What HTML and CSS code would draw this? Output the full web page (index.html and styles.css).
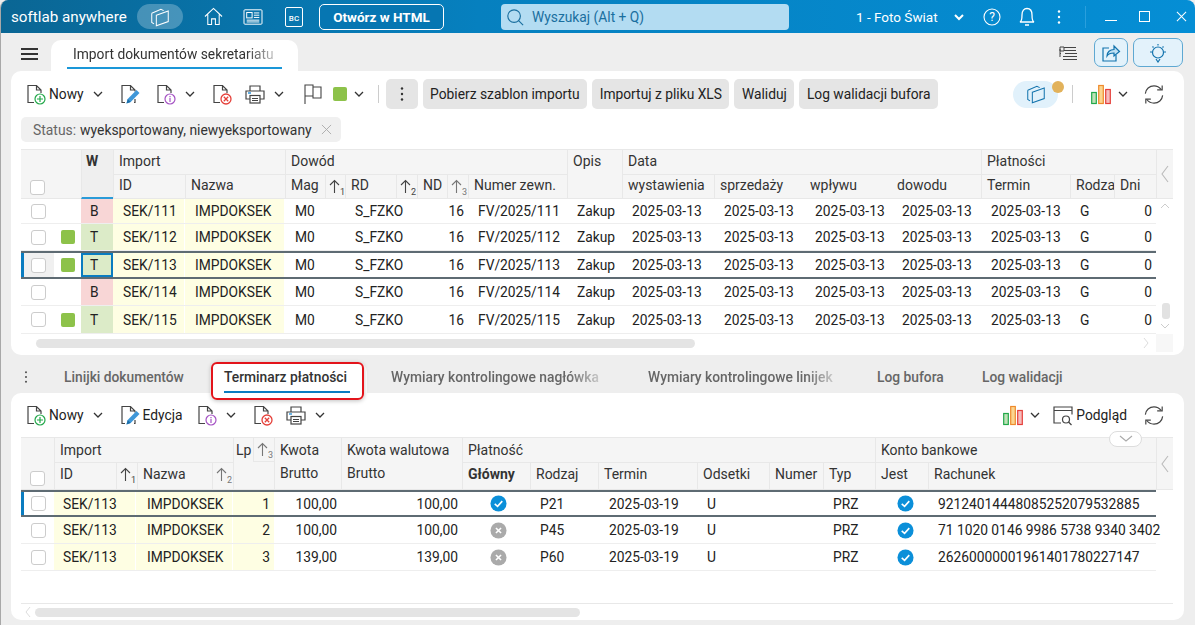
FILE: index.html
```html
<!DOCTYPE html>
<html lang="pl">
<head>
<meta charset="utf-8">
<title>Import dokumentów sekretariatu</title>
<link rel="stylesheet" href="styles.css">
</head>
<body>
<svg class="defs" width="0" height="0" aria-hidden="true">
  <symbol id="doc" viewBox="0 0 20 21"><path d="M8 18.5H2V1.5h8.5L15 6v3M10.5 1.5V6H15" fill="none" stroke="#444" stroke-width="1.2"/></symbol>
  <symbol id="doc-new" viewBox="0 0 20 21"><use href="#doc"/><circle cx="14" cy="15" r="5" fill="#fff" stroke="#22a84a" stroke-width="1.2"/><path d="M14 12v6M11 15h6" stroke="#22a84a" stroke-width="1.2"/></symbol>
  <symbol id="doc-edit" viewBox="0 0 20 21"><path d="M5 18.5H2V1.5h8.5L15 6v1.5M10.5 1.5V6H15M14 18.5h1V15" fill="none" stroke="#444" stroke-width="1.2"/><path d="M6.5 19.5l1.2-4.5L16.5 6l3 3-8.8 9z" fill="#3f97d8"/><path d="M6.5 19.5l1.2-4.5 3 3z" fill="#1b6ea8"/></symbol>
  <symbol id="doc-info" viewBox="0 0 20 21"><use href="#doc"/><circle cx="14" cy="15" r="5" fill="#fff" stroke="#a552c4" stroke-width="1.2"/><path d="M14 14v4M14 12v1.2" stroke="#a552c4" stroke-width="1.2"/></symbol>
  <symbol id="doc-del" viewBox="0 0 20 21"><use href="#doc"/><circle cx="14" cy="15" r="5" fill="#fff" stroke="#e5403a" stroke-width="1.3"/><path d="M11.8 12.8l4.4 4.4M16.2 12.8l-4.4 4.4" stroke="#e5403a" stroke-width="1.3"/></symbol>
  <symbol id="printer" viewBox="0 0 20 20"><path d="M5 6V1.5h10V6M5 14.5H1V6.500h18v8H15" fill="none" stroke="#444" stroke-width="1.2"/><rect x="5" y="11" width="10" height="7.5" fill="#fff" stroke="#444" stroke-width="1.2"/><path d="M7 14h6M7 16h6" stroke="#444"/><path d="M3 8.500h3" stroke="#2a92d8" stroke-width="1.4"/></symbol>
  <symbol id="chev" viewBox="0 0 12 12"><path d="M2 4l4 4 4-4" fill="none" stroke="#333" stroke-width="1.3"/></symbol>
  <symbol id="kebab" viewBox="0 0 4 16"><circle cx="2" cy="2.5" r="1.2"/><circle cx="2" cy="8" r="1.2"/><circle cx="2" cy="13.5" r="1.2"/></symbol>
  <symbol id="cubes" viewBox="0 0 24 24"><path d="M3 8l10-4.500 3 1.500M3 8v10l2.500 1.500" fill="none" stroke="currentColor" stroke-width="1.1"/><path d="M8 10l13-4.500v11.500L8 21.500z" fill="none" stroke="currentColor" stroke-width="1.1"/></symbol>
  <symbol id="chart" viewBox="0 0 20 20"><rect x=".7" y="8" width="4.600" height="11" fill="#bfe3b8" stroke="#22a84a" stroke-width="1.200"/><rect x="7.700" y="1" width="4.600" height="18" fill="#fbd58f" stroke="#ef8a2c" stroke-width="1.200"/><rect x="14.700" y="5" width="4.600" height="14" fill="#f6bcbc" stroke="#e5403a" stroke-width="1.200"/></symbol>
  <symbol id="refresh" viewBox="0 0 22 22"><path d="M1.500 10C2 5 6 1.500 11 1.500c3.500 0 6 1.500 8 4M20.500 12c-.5 5-4.500 8.500-9.500 8.500-3.500 0-6-1.500-8-4" fill="none" stroke="#444" stroke-width="1.300"/><path d="M20 1v5h-5.500M2 21v-5h5.500" fill="none" stroke="#444" stroke-width="1.300"/></symbol>
  <symbol id="ok" viewBox="0 0 18 18"><circle cx="9" cy="9" r="8.500" fill="#0b8fd9"/><path d="M5 9.500l3 2.500 5-5.500" fill="none" stroke="#fff" stroke-width="1.700"/></symbol>
  <symbol id="no" viewBox="0 0 18 18"><circle cx="9" cy="9" r="8.500" fill="#aaa"/><path d="M6.300 6.300l5.400 5.400M11.700 6.300l-5.400 5.400" fill="none" stroke="#fff" stroke-width="1.700"/></symbol>
  <symbol id="up" viewBox="0 0 11 14"><path d="M5.500 14V1.500M1 6l4.500-4.500L10 6" fill="none" stroke="currentColor" stroke-width="1.100"/></symbol>
  <symbol id="left" viewBox="0 0 10 18"><path d="M8 1L2 9l6 8" fill="none" stroke="#bbb" stroke-width="1.100"/></symbol>
</svg>

<div class="window">
  <header class="titlebar">
    <span class="brand">softlab anywhere</span>
    <span class="cube-pill"><svg class="ic22"><use href="#cubes"/></svg></span>
    <svg class="home" viewBox="0 0 20 20" fill="none" stroke="#fff" stroke-width="1.100"><path d="M1 10l9-8.500L19 10M4 8v10.500h4v-6h4v6h4V8"/></svg>
    <svg class="news" viewBox="0 0 22 20" fill="none" stroke="#fff" stroke-width="1.100"><rect x="1" y="2" width="20" height="16" rx="1"/><rect x="4" y="5" width="6" height="6"/><path d="M12 5.500h6M12 8h6M12 10.500h6M4 13.500h14M4 15.500h14"/></svg>
    <span class="bc">BC</span>
    <button class="html-btn">Otwórz w HTML</button>
    <div class="search">
      <svg class="search-ic" viewBox="0 0 20 20" fill="none" stroke="#1a6f9f" stroke-width="1.300"><circle cx="9" cy="9" r="7"/><path d="M14 14l5 5"/></svg>
      <span>Wyszukaj (Alt + Q)</span>
    </div>
    <span class="company">1 - Foto Świat</span>
    <svg class="tb-chev" viewBox="0 0 12 12"><path d="M2 4l4 4 4-4" fill="none" stroke="#fff" stroke-width="2"/></svg>
    <svg class="help" viewBox="0 0 18 18"><circle cx="9" cy="9" r="8" fill="none" stroke="#fff" stroke-width="1.100"/><text x="9" y="13" text-anchor="middle" class="help-q">?</text></svg>
    <svg class="bell" viewBox="0 0 16 20" fill="none" stroke="#fff" stroke-width="1.300"><path d="M1 15.500c2-1 2-3 2-7C3 4 5 2 8 2s5 2 5 6.500c0 4 0 6 2 7zM6 18.500h4"/></svg>
    <svg class="tb-kebab"><use href="#kebab"/></svg>
    <span class="tb-sep"></span>
    <span class="win-min"></span>
    <span class="win-max"></span>
    <svg class="win-close" viewBox="0 0 12 12"><path d="M1 1l10 10M11 1L1 11" stroke="#fff" stroke-width="1.100"/></svg>
  </header>

  <div class="tabbar">
    <span class="burger"><i></i><i></i><i></i></span>
    <div class="doc-tab"><span class="fade">Import dokumentów sekretariatu</span></div>
    <svg class="list-ic" viewBox="0 0 18 16" fill="none" stroke="#444"><path d="M1 1h4v4H1zM5 1.500h12M5 4.500h12M6 7.500h12M1 7.500h1M4 10.500h14M4 13.500h14M1 3v8"/></svg>
    <button class="tb-square share"><svg viewBox="0 0 20 20" fill="none" stroke="#1273ad" stroke-width="1.200"><path d="M8 5H2v13h13v-6"/><path d="M6 13c0-4 3-6.500 7-6.500V3l5.500 5.500L13 13V10c-3 0-5.500.5-7 3z" fill="#bfe0f3"/></svg></button>
    <button class="tb-square bulb"><svg viewBox="0 0 26 20" fill="none" stroke="#1273ad" stroke-width="1.200"><circle cx="13" cy="9.500" r="5.500"/><path d="M11 16l2 3 2-3M13 1v1.500M5 9h2M19 9h2M7.500 3.500l1 1M18.500 3.500l-1 1"/></svg></button>
  </div>

  <section class="panel upper">
    <div class="toolbar">
      <button class="tool"><svg class="ic20"><use href="#doc-new"/></svg><span class="tool-label">Nowy</span><svg class="chev"><use href="#chev"/></svg></button>
      <button class="tool"><svg class="ic20"><use href="#doc-edit"/></svg></button>
      <button class="tool"><svg class="ic20"><use href="#doc-info"/></svg><svg class="chev"><use href="#chev"/></svg></button>
      <button class="tool"><svg class="ic20"><use href="#doc-del"/></svg></button>
      <button class="tool tight"><svg class="ic20"><use href="#printer"/></svg><svg class="chev"><use href="#chev"/></svg></button>
      <button class="tool flag-tool"><svg class="flag" viewBox="0 0 18 20" fill="none" stroke="#444" stroke-width="1.100"><path d="M1 20V1h8v2h8v11H9v-2H1M9 3v9"/></svg><span class="swatch tool-swatch"></span><svg class="chev near"><use href="#chev"/></svg></button>
      <span class="v-sep"></span>
      <button class="gray-btn kebab-btn"><svg class="kebab-ic"><use href="#kebab"/></svg></button>
      <button class="gray-btn">Pobierz szablon importu</button>
      <button class="gray-btn">Importuj z pliku XLS</button>
      <button class="gray-btn">Waliduj</button>
      <button class="gray-btn">Log walidacji bufora</button>
      <span class="grow"></span>
      <span class="cube-blue"><svg class="ic22"><use href="#cubes"/></svg><i class="dot"></i></span>
      <span class="v-sep sep-right"></span>
      <button class="tool chart-tool"><svg class="ic20"><use href="#chart"/></svg><svg class="chev near"><use href="#chev"/></svg></button>
      <button class="tool refresh-tool"><svg class="ic20"><use href="#refresh"/></svg></button>
    </div>
    <div class="chip"><span class="chip-key">Status:</span> <span class="chip-val">wyeksportowany, niewyeksportowany</span>
      <svg class="chip-x" viewBox="0 0 12 12"><path d="M1 1l10 10M11 1L1 11" stroke="#aaa" stroke-width="1"/></svg></div>

    <div class="grid">
      <div class="ghead h49">
        <div class="hc w33 check-head"><span class="cb"></span></div>
        <div class="hc w27"></div>
        <div class="hc w32 w-head">W</div>
        <div class="hg w172"><div class="ht">Import</div><div class="hs"><div class="sc w72">ID</div><div class="sc w100">Nazwa</div></div></div>
        <div class="hg w282"><div class="ht">Dowód</div><div class="hs">
          <div class="sc w40">Mag</div><div class="sc sort w20"><svg><use href="#up"/></svg><i>1</i></div>
          <div class="sc w51">RD</div><div class="sc sort w21"><svg><use href="#up"/></svg><i>2</i></div>
          <div class="sc w30">ND</div><div class="sc sort w21 pale"><svg><use href="#up"/></svg><i>3</i></div>
          <div class="sc w99 clip">Numer zewn.</div></div></div>
        <div class="hg w55"><div class="ht">Opis</div></div>
        <div class="hg w359"><div class="ht">Data</div><div class="hs"><div class="sc w92">wystawienia</div><div class="sc w91">sprzedaży</div><div class="sc w87 nl">wpływu</div><div class="sc w89 nl">dowodu</div></div></div>
        <div class="hg w175"><div class="ht">Płatności</div><div class="hs"><div class="sc w89">Termin</div><div class="sc w44">Rodza</div><div class="sc w42">Dni</div></div></div>
        <div class="hc w17 head-end"><svg class="left-ic"><use href="#left"/></svg></div>
      </div>
      <div class="gbody">
        <div class="rows">
          <div class="row urow h25">
            <div class="td"><span class="cb"></span></div><div class="td"></div><div class="td wc bad">B</div>
            <div class="td y">SEK/111</div><div class="td y">IMPDOKSEK</div><div class="td">M0</div><div class="td">S_FZKO</div><div class="td r">16</div><div class="td">FV/2025/111</div><div class="td">Zakup</div>
            <div class="td">2025-03-13</div><div class="td">2025-03-13</div><div class="td">2025-03-13</div><div class="td">2025-03-13</div><div class="td">2025-03-13</div><div class="td">G</div><div class="td r">0</div>
          </div>
          <div class="row urow h27">
            <div class="td"><span class="cb"></span></div><div class="td"><span class="swatch"></span></div><div class="td wc good">T</div>
            <div class="td y">SEK/112</div><div class="td y">IMPDOKSEK</div><div class="td">M0</div><div class="td">S_FZKO</div><div class="td r">16</div><div class="td">FV/2025/112</div><div class="td">Zakup</div>
            <div class="td">2025-03-13</div><div class="td">2025-03-13</div><div class="td">2025-03-13</div><div class="td">2025-03-13</div><div class="td">2025-03-13</div><div class="td">G</div><div class="td r">0</div>
          </div>
          <div class="row urow h28 sel">
            <div class="td gray"><span class="cb"></span></div><div class="td"><span class="swatch"></span></div><div class="td wc good focus">T</div>
            <div class="td y">SEK/113</div><div class="td y">IMPDOKSEK</div><div class="td">M0</div><div class="td">S_FZKO</div><div class="td r">16</div><div class="td">FV/2025/113</div><div class="td">Zakup</div>
            <div class="td">2025-03-13</div><div class="td">2025-03-13</div><div class="td">2025-03-13</div><div class="td">2025-03-13</div><div class="td">2025-03-13</div><div class="td">G</div><div class="td r">0</div>
          </div>
          <div class="row urow h27">
            <div class="td"><span class="cb"></span></div><div class="td"></div><div class="td wc bad">B</div>
            <div class="td y">SEK/114</div><div class="td y">IMPDOKSEK</div><div class="td">M0</div><div class="td">S_FZKO</div><div class="td r">16</div><div class="td">FV/2025/114</div><div class="td">Zakup</div>
            <div class="td">2025-03-13</div><div class="td">2025-03-13</div><div class="td">2025-03-13</div><div class="td">2025-03-13</div><div class="td">2025-03-13</div><div class="td">G</div><div class="td r">0</div>
          </div>
          <div class="row urow h28">
            <div class="td"><span class="cb"></span></div><div class="td"><span class="swatch"></span></div><div class="td wc good">T</div>
            <div class="td y">SEK/115</div><div class="td y">IMPDOKSEK</div><div class="td">M0</div><div class="td">S_FZKO</div><div class="td r">16</div><div class="td">FV/2025/115</div><div class="td">Zakup</div>
            <div class="td">2025-03-13</div><div class="td">2025-03-13</div><div class="td">2025-03-13</div><div class="td">2025-03-13</div><div class="td">2025-03-13</div><div class="td">G</div><div class="td r">0</div>
          </div>
        </div>
        <div class="vscroll">
          <svg class="vs-chev" viewBox="0 0 12 12"><path d="M2 8l4-4 4 4" fill="none" stroke="#ccc"/></svg>
          <span class="grow"></span>
          <span class="vs-thumb"></span>
          <svg class="vs-chev" viewBox="0 0 12 12"><path d="M2 4l4 4 4-4" fill="none" stroke="#ccc"/></svg>
        </div>
      </div>
      <div class="hscroll up-h">
        <span class="h-thumb thumb-up"></span>
        <span class="grow"></span>
        <svg class="hs-right" viewBox="0 0 8 14"><path d="M2 2l4 5-4 5" fill="none" stroke="#ddd"/></svg>
        <span class="corner"></span>
      </div>
    </div>
  </section>

  <nav class="subtabs">
    <svg class="sub-kebab"><use href="#kebab"/></svg>
    <span class="subtab first">Linijki dokumentów</span>
    <span class="subtab active">Terminarz płatności</span>
    <span class="subtab t3 fade">Wymiary kontrolingowe nagłówka</span>
    <span class="subtab t4 fade">Wymiary kontrolingowe linijek</span>
    <span class="subtab t5">Log bufora</span>
    <span class="subtab t6">Log walidacji</span>
  </nav>

  <section class="panel lower">
    <div class="toolbar low-bar">
      <button class="tool"><svg class="ic20"><use href="#doc-new"/></svg><span class="tool-label">Nowy</span><svg class="chev"><use href="#chev"/></svg></button>
      <button class="tool"><svg class="ic20"><use href="#doc-edit"/></svg><span class="tool-label">Edycja</span></button>
      <button class="tool info-low"><svg class="ic20"><use href="#doc-info"/></svg><svg class="chev"><use href="#chev"/></svg></button>
      <button class="tool"><svg class="ic20"><use href="#doc-del"/></svg></button>
      <button class="tool tight print-low"><svg class="ic20"><use href="#printer"/></svg><svg class="chev"><use href="#chev"/></svg></button>
      <span class="grow"></span>
      <button class="tool chart-tool"><svg class="ic20"><use href="#chart"/></svg><svg class="chev near"><use href="#chev"/></svg></button>
      <button class="tool preview"><svg class="ic20" viewBox="0 0 20 20" fill="none" stroke="#444" stroke-width="1.200"><path d="M8 17.500H1V1.500h18V9M1 5h18" /><circle cx="13" cy="14" r="3.500"/><path d="M15.500 16.500l3 3"/></svg><span class="tool-label">Podgląd</span></button>
      <button class="tool refresh-tool low-ref"><svg class="ic20"><use href="#refresh"/></svg></button>
    </div>
    <span class="collapse"><svg viewBox="0 0 14 8"><path d="M1 1l6 5 6-5" fill="none" stroke="#aaa" stroke-width="1.100"/></svg></span>
    <div class="grid lgrid">
      <div class="ghead h52">
        <div class="hc w33 check-head"><span class="cb"></span></div>
        <div class="hg w179"><div class="ht">Import</div><div class="hs"><div class="sc w62">ID</div><div class="sc sort w21"><svg><use href="#up"/></svg><i>1</i></div><div class="sc w75">Nazwa</div><div class="sc sort w21 pale"><svg><use href="#up"/></svg><i>2</i></div></div></div>
        <div class="hg w41"><div class="ht lp"><span class="lp-t">Lp</span><span class="sort w22 pale"><svg><use href="#up"/></svg><i>3</i></span></div></div>
        <div class="hg w67"><div class="ht">Kwota</div><div class="hs nolines"><div class="sc">Brutto</div></div></div>
        <div class="hg w121"><div class="ht">Kwota walutowa</div><div class="hs nolines"><div class="sc">Brutto</div></div></div>
        <div class="hg w413"><div class="ht">Płatność</div><div class="hs"><div class="sc w68 bold">Główny</div><div class="sc w68">Rodzaj</div><div class="sc w99">Termin</div><div class="sc w72">Odsetki</div><div class="sc w54 clip">Numer</div><div class="sc w52">Typ</div></div></div>
        <div class="hg w281"><div class="ht">Konto bankowe</div><div class="hs"><div class="sc w53">Jest</div><div class="sc w228">Rachunek</div></div></div>
        <div class="hc w17 head-end"><svg class="left-ic"><use href="#left"/></svg></div>
      </div>
      <div class="lrows">
        <div class="row lrow h27 sel sel-low">
          <div class="td"><span class="cb"></span></div><div class="td y">SEK/113</div><div class="td y">IMPDOKSEK</div><div class="td y r">1</div><div class="td r">100,00</div><div class="td r">100,00</div>
          <div class="td c"><svg class="ic16"><use href="#ok"/></svg></div><div class="td">P21</div><div class="td">2025-03-19</div><div class="td">U</div><div class="td"></div><div class="td">PRZ</div>
          <div class="td c"><svg class="ic16"><use href="#ok"/></svg></div><div class="td">92124014448085252079532885</div>
        </div>
        <div class="row lrow h27">
          <div class="td"><span class="cb"></span></div><div class="td y">SEK/113</div><div class="td y">IMPDOKSEK</div><div class="td y r">2</div><div class="td r">100,00</div><div class="td r">100,00</div>
          <div class="td c"><svg class="ic16"><use href="#no"/></svg></div><div class="td">P45</div><div class="td">2025-03-19</div><div class="td">U</div><div class="td"></div><div class="td">PRZ</div>
          <div class="td c"><svg class="ic16"><use href="#ok"/></svg></div><div class="td">71 1020 0146 9986 5738 9340 3402</div>
        </div>
        <div class="row lrow h27">
          <div class="td"><span class="cb"></span></div><div class="td y">SEK/113</div><div class="td y">IMPDOKSEK</div><div class="td y r">3</div><div class="td r">139,00</div><div class="td r">139,00</div>
          <div class="td c"><svg class="ic16"><use href="#no"/></svg></div><div class="td">P60</div><div class="td">2025-03-19</div><div class="td">U</div><div class="td"></div><div class="td">PRZ</div>
          <div class="td c"><svg class="ic16"><use href="#ok"/></svg></div><div class="td">26260000001961401780227147</div>
        </div>
      </div>
      <div class="hscroll low-h">
        <svg class="hs-left" viewBox="0 0 8 14"><path d="M6 2L2 7l4 5" fill="none" stroke="#ddd"/></svg>
        <span class="h-thumb thumb-low"></span>
      </div>
    </div>
  </section>
</div>
</body>
</html>
```

FILE: styles.css
```css
* { box-sizing: border-box; }
html, body { margin: 0; padding: 0; }
body { width: 1195px; height: 625px; overflow: hidden; background: #eee; font-family: Roboto, "Liberation Sans", sans-serif; font-size: 14px; color: #222; }
.defs { position: absolute; }
button { font: inherit; color: inherit; border: 0; background: none; padding: 0; }
i { font-style: normal; }
svg { display: block; flex: none; }
.grow { flex: 1; }

.window { width: 1195px; height: 625px; display: flex; flex-direction: column; background: #eee; border-left: 1px solid #a8a8a8; border-radius: 8px 8px 0 0; overflow: hidden; }

/* title bar */
.titlebar { height: 33px; flex: none; display: flex; align-items: center; color: #fff; background: linear-gradient(90deg, #0a6694 0, #0680bf 40%, #058ed5 100%); }
.brand { font-size: 15.2px; margin-left: 10px; width: 126px; white-space: nowrap; }
.cube-pill { width: 46px; height: 25px; border-radius: 13px; background: rgba(255,255,255,.25); display: flex; align-items: center; justify-content: center; color: #fff; }
.ic22 { width: 22px; height: 22px; }
.home { width: 19px; height: 19px; margin-left: 21px; }
.news { width: 20px; height: 18px; margin-left: 20px; }
.bc { width: 18px; height: 20px; margin-left: 22px; border: 1px solid #fff; border-radius: 2px; font-size: 8px; font-weight: 500; text-align: center; line-height: 22px; }
.html-btn { width: 125px; height: 26px; margin-left: 16px; border: 1px solid #fff; border-radius: 5px; color: #fff; font-weight: 700; font-size: 13.5px; background: #0676b2; }
.search { width: 288px; height: 26px; margin-left: 57px; background: #b3dcf2; border-radius: 4px; display: flex; align-items: center; padding-left: 5px; color: #1a6f9f; font-size: 13.8px; }
.search-ic { width: 18px; height: 18px; margin-right: 8px; }
.company { margin-left: 67px; width: 84px; font-size: 13.5px; white-space: nowrap; }
.tb-chev { width: 12px; height: 12px; margin-left: 13px; }
.help { width: 18px; height: 18px; margin-left: 18px; }
.help-q { font-size: 12px; fill: #fff; font-family: Roboto, sans-serif; }
.bell { width: 16px; height: 21px; margin-left: 18px; }
.tb-kebab { width: 4px; height: 16px; margin-left: 22px; fill: #fff; }
.tb-sep { width: 1px; height: 22px; margin-left: 24px; background: #2a9fdd; }
.win-min { width: 12px; height: 1px; margin-left: 19px; margin-top: 8px; background: #fff; }
.win-max { width: 11px; height: 11px; margin-left: 22px; border: 1px solid #fff; }
.win-close { width: 11px; height: 11px; margin-left: 26px; }

/* tab strip */
.tabbar { height: 38px; flex: none; display: flex; align-items: flex-end; }
.burger { width: 17px; margin-left: 20px; margin-bottom: 11px; display: flex; flex-direction: column; gap: 3px; }
.burger i { height: 2px; background: #333; }
.doc-tab { width: 247px; height: 31px; margin-left: 13px; background: #fff; border-radius: 10px 10px 0 0; position: relative; padding: 6px 22px 0; font-size: 13.8px; color: #333; white-space: nowrap; }
.doc-tab::after { content: ""; position: absolute; left: 16px; right: 16px; bottom: 2px; height: 2px; background: #1a97d8; }
.fade { display: inline-block; overflow: hidden; -webkit-mask-image: linear-gradient(90deg, #000 85%, rgba(0,0,0,.25) 100%); mask-image: linear-gradient(90deg, #000 85%, rgba(0,0,0,.25) 100%); }
.doc-tab .fade { width: 203px; }
.list-ic { width: 18px; height: 16px; margin-left: 761px; margin-bottom: 9px; }
.tb-square { height: 29px; margin-bottom: 4px; border: 1px solid #5ea8d2; border-radius: 7px; background: #e3f2fb; display: flex; align-items: center; justify-content: center; }
.share { width: 34px; margin-left: 17px; }
.share svg { width: 20px; height: 20px; }
.bulb { width: 50px; margin-left: 5px; }
.bulb svg { width: 26px; height: 20px; }

/* panels */
.panel { background: #fff; margin: 0 11px 0 10px; position: relative; display: flex; flex-direction: column; flex: none; }
.upper { height: 284px; border-radius: 10px; }
.lower { height: 227px; border-radius: 10px; }

/* toolbars */
.toolbar { height: 38px; flex: none; display: flex; align-items: center; padding: 8px 0 0 9px; }
.low-bar { height: 44px; padding-top: 0; }
.tool { height: 30px; display: flex; align-items: center; padding: 0 6px; margin-right: 4px; white-space: nowrap; font-size: 13.8px; }
.tool.tight { margin-left: -3px; margin-right: 5px; }
.ic20 { width: 20px; height: 21px; }
.ic16 { width: 17px; height: 17px; }
.tool-label { margin-left: 3px; }
.chev { width: 12px; height: 12px; margin-left: 8px; }
.chev.near { margin-left: 6px; }
.info-low { margin-left: -2px; }
.print-low { margin-left: -2px; }
.flag-tool { margin-left: 2px; }
.flag { width: 18px; height: 20px; }
.swatch { display: block; width: 14px; height: 14px; background: #8dc24a; border-radius: 2px; }
.tool-swatch { margin-left: 11px; }
.v-sep { width: 1px; height: 18px; background: #ccc; margin-left: 3px; margin-right: 7px; }
.gray-btn { height: 30px; padding: 0 7.5px; margin-right: 5px; background: #e5e5e5; border-radius: 5px; font-size: 13.8px; white-space: nowrap; color: #222; }
.kebab-btn { width: 32px; display: flex; align-items: center; justify-content: center; padding: 0; }
.kebab-ic { width: 4px; height: 16px; fill: #333; }
.cube-blue { width: 45px; height: 27px; border-radius: 14px; background: #e1f1fb; color: #1273ad; position: relative; display: flex; align-items: center; justify-content: center; }
.dot { position: absolute; width: 12px; height: 12px; border-radius: 50%; background: #e2b25b; right: -6px; top: 0; }
.sep-right { margin-left: 14px; margin-right: 12px; }
.chart-tool { margin-right: 0; }
.refresh-tool { margin-right: 14px; margin-left: 3px; }
.low-ref { margin-left: 0; }
.preview { margin-right: 0; padding-right: 11px; }
.preview .tool-label { margin-left: 3px; }

.chip { height: 25px; width: 320px; flex: none; margin: 8px 0 0 10px; background: #f0f0f0; border-radius: 5px; display: flex; align-items: center; padding-left: 12px; gap: 4px; white-space: nowrap; font-size: 13.9px; }
.chip-key { color: #666; }
.chip-val { color: #333; }
.chip-x { width: 11px; height: 11px; margin-left: 5px; }

/* grids */
.grid { margin: 7px 0 0 10px; width: 1152px; flex: none; }
.lgrid { margin-top: 0; }
.ghead { display: flex; background: #f5f5f5; border-top: 1px solid #e8e8e8; border-bottom: 1px solid #e8e8e8; color: #333; font-size: 14px; }
.h49 { height: 50px; }
.h52 { height: 53px; }
.hc { flex: none; position: relative; }
.check-head { display: flex; align-items: flex-end; justify-content: center; padding-bottom: 3px; }
.cb { display: block; width: 15px; height: 15px; background: #fff; border: 1px solid #ccc; border-radius: 3px; }
.w-head { background: #efefef; border-bottom: 2px solid #2a9bd8; padding: 3px 0 0 4px; font-weight: 700; border-left: 1px solid #e8e8e8; margin-bottom: -1px; }
.hg { flex: none; display: flex; flex-direction: column; border-left: 1px solid #e8e8e8; }
.ht { height: 24px; padding: 3px 0 0 5px; line-height: 18px; white-space: nowrap; }
.h49 .ht { padding-top: 2px; }
.hs { display: flex; height: 24px; margin-left: -1px; border-top: 1px solid #e8e8e8; flex: 1; }
.nolines { border-top: 0; margin-left: 0; }
.sc { flex: none; padding: 2px 0 0 5px; line-height: 18px; white-space: nowrap; border-left: 1px solid #e8e8e8; }
.h49 .sc { padding-top: 1px; }
.nolines .sc { border-left: 0; }
.sc.nl { border-left: 0; padding-left: 5px; }
.clip { overflow: hidden; }
.bold { font-weight: 700; }
.sort, .h49 .sort { display: inline-flex; align-items: flex-start; padding: 4px 0 0 3px; color: #444; }
.sort svg { width: 11px; height: 14px; }
.sort i { font-size: 9px; line-height: 9px; margin-top: 9px; }
.sort.pale { color: #777; }
.ht.lp { display: flex; padding: 0 0 0 2px; height: 24px; }
.lp-t { padding-top: 3px; width: 18px; }
.lp .sort { border-left: 1px solid #e8e8e8; border-bottom: 1px solid #e8e8e8; height: 24px; }
.head-end { border-left: 1px solid #e8e8e8; display: flex; align-items: center; justify-content: center; }
.left-ic { width: 10px; height: 18px; }

.w17 { width: 17px; } .w20 { width: 20px; } .w21 { width: 21px; } .w22 { width: 22px; } .w27 { width: 27px; }
.w30 { width: 30px; } .w32 { width: 32px; } .w33 { width: 33px; } .w40 { width: 40px; } .w41 { width: 41px; }
.w42 { width: 42px; } .w44 { width: 44px; } .w51 { width: 51px; } .w52 { width: 52px; } .w53 { width: 53px; }
.w54 { width: 54px; } .w55 { width: 55px; } .w62 { width: 62px; } .w67 { width: 67px; } .w68 { width: 68px; }
.w72 { width: 72px; } .w75 { width: 75px; } .w87 { width: 87px; } .w89 { width: 89px; } .w91 { width: 91px; }
.w92 { width: 92px; } .w99 { width: 99px; } .w100 { width: 100px; } .w121 { width: 121px; } .w172 { width: 172px; }
.w175 { width: 175px; } .w179 { width: 179px; } .w228 { width: 228px; } .w281 { width: 281px; } .w282 { width: 282px; }
.w359 { width: 359px; } .w413 { width: 413px; }

.gbody { display: flex; }
.rows { width: 1135px; }
.row { display: grid; border-bottom: 1px solid #eee; position: relative; }
.urow { grid-template-columns: 33px 27px 32px 72px 100px 60px 72px 51px 99px 55px 92px 91px 87px 89px 89px 44px 42px; }
.lrow { grid-template-columns: 33px 82px 97px 42px 66px 121px 68px 68px 99px 72px 54px 52px 53px 228px; }
.h25 { height: 25px; } .h27 { height: 27px; } .h28 { height: 28px; }
.td { display: flex; align-items: center; padding-left: 10px; white-space: nowrap; color: #222; font-size: 13.8px; min-width: 0; }
.td:first-child { padding-left: 2px; justify-content: center; }
.urow .td:nth-child(2) { padding: 0; justify-content: center; }
.lrow .td:nth-child(2) { padding-left: 9px; }
.lrow .td:nth-child(3), .lrow .td:nth-child(9) { padding-left: 11px; }
.r, .lrow .td.r { justify-content: flex-end; padding: 0 4px 0 0; }
.lrow .td:nth-child(7) { padding-left: 5px; }
.lrow .td:nth-child(13) { padding-left: 7px; }
.c { justify-content: center; padding: 0; }
.y { background: #fefee3; border-right: 1px solid #fff; }
.wc { padding: 0 0 0 9px; }
.bad { background: #f8d6d6; }
.good { background: #dcebc8; }
.gray { background: #f0f0f0; }
.sel { border-top: 2px solid #5e6b73; border-bottom: 2px solid #5e6b73; }
.sel::before { content: ""; position: absolute; left: 0; top: 0; bottom: 0; width: 3px; background: #0a7cc0; }
.focus { border: 2px solid #0a7cc0; padding-left: 7px; }

.vscroll { width: 17px; display: flex; flex-direction: column; align-items: center; padding: 0 0 1px; }
.vs-chev { width: 12px; height: 12px; margin: 1px 0; }
.vs-thumb { width: 8px; height: 16px; border-radius: 3px; background: #e2e2e2; margin-left: 2px; }

.hscroll { display: flex; align-items: center; }
.up-h { height: 18px; }
.h-thumb { display: block; height: 9px; border-radius: 5px; background: #e4e4e4; }
.thumb-up { width: 659px; margin-left: 15px; }
.hs-right { width: 8px; height: 14px; margin-right: 3px; }
.corner { width: 17px; height: 18px; background: #f7f7f7; margin-left: 3px; }

/* sub tabs */
.subtabs { height: 31px; margin-top: 7px; flex: none; display: flex; align-items: stretch; position: relative; z-index: 2; }
.sub-kebab { width: 4px; height: 14px; margin: 8px 0 0 23px; fill: #555; }
.subtab { display: block; flex: none; white-space: nowrap; color: #666; font-weight: 500; font-size: 13.8px; padding-top: 7px; }
.first { margin-left: 36px; width: 146px; }
.active { width: 157px; background: #fff; border-radius: 10px 10px 0 0; padding-left: 14px; color: #333; position: relative; }
.active::before { content: ""; position: absolute; left: 14px; width: 126px; bottom: 0; height: 2px; background: #0a7cc0; }
.active::after { content: ""; position: absolute; left: 1px; top: 0; width: 149px; height: 34px; border: 2px solid #e3141b; border-radius: 6px; box-shadow: 0 1px 4px rgba(0,0,0,.25); }
.t3 { margin-left: 24px; width: 209px; }
.t4 { margin-left: 48px; width: 186px; }
.t5 { margin-left: 43px; width: 67px; }
.t6 { margin-left: 38px; width: 80px; }

.collapse { position: absolute; left: 1098px; top: 38px; width: 33px; height: 16px; background: #fff; border: 1px solid #ddd; border-radius: 8px; display: flex; align-items: center; justify-content: center; z-index: 1; }
.collapse svg { width: 14px; height: 8px; }

.lrows { height: 114px; border-bottom: 1px solid #e8e8e8; }
.lrows .row { width: 1135px; }
.low-h { height: 16px; }
.hs-left { width: 8px; height: 14px; margin-left: 3px; }
.thumb-low { width: 545px; margin-left: 3px; }
```
